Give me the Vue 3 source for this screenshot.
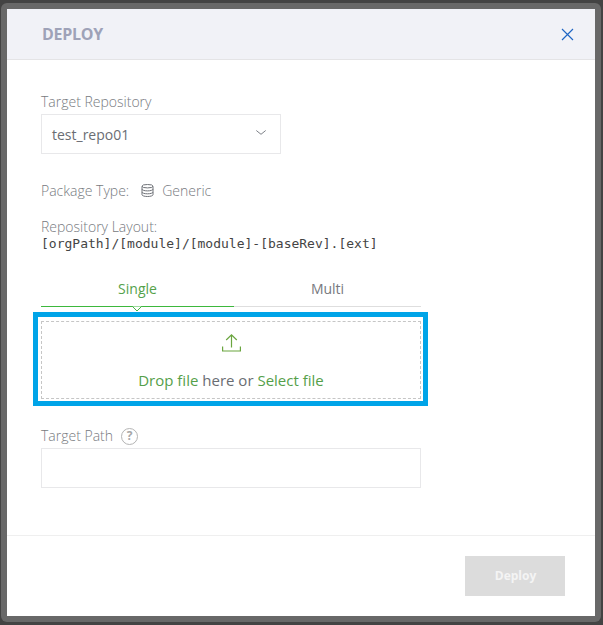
<script setup>
const tabs = [
  { label: 'Single', active: true },
  { label: 'Multi', active: false },
]
</script>

<template>
  <div class="screen">
    <div class="frame">
      <section class="modal">
        <header class="head">
          <h1 class="title">DEPLOY</h1>
          <svg class="close" width="13" height="13" viewBox="0 0 13 13" fill="none">
            <path d="M1 1l11 11M12 1L1 12" />
          </svg>
        </header>

        <div class="body">
          <label class="label first">Target Repository</label>
          <div class="select">
            <span>test_repo01</span>
            <svg class="chev" width="10" height="5" viewBox="0 0 10 5" fill="none" stroke="#7d8087" stroke-width="1">
              <path d="M.3.500L5 4.300 9.700.500" />
            </svg>
          </div>

          <div class="pkg">
            <span class="muted">Package Type:</span>
            <svg class="db" width="13" height="13" viewBox="0 0 13 13" fill="none" stroke="#6f7278" stroke-width="1">
              <ellipse cx="6.500" cy="2.200" rx="5.500" ry="1.700" />
              <path d="M1 2.200v8.600c0 .9 2.500 1.700 5.500 1.700s5.500-.8 5.500-1.700V2.200M1 5.200c0 .9 2.500 1.700 5.500 1.700S12 6.100 12 5.200M1 8.100c0 .9 2.500 1.700 5.500 1.700S12 9 12 8.100" />
            </svg>
            <span class="muted">Generic</span>
          </div>

          <div class="muted layout-label">Repository Layout:</div>
          <div class="mono">[orgPath]/[module]/[module]-[baseRev].[ext]</div>

          <div class="tabs">
            <div v-for="t in tabs" :key="t.label" class="tab" :class="{ active: t.active }">
              {{ t.label }}
              <svg v-if="t.active" class="caret" width="12" height="7" viewBox="0 0 12 7">
                <path d="M0 .5h1.500L6 5l4.500-4.500H12" fill="#fff" stroke="#45b545" stroke-width="1" />
              </svg>
            </div>
          </div>

          <div class="drop">
            <svg class="upload" width="19" height="18" viewBox="0 0 19 18" fill="none" stroke="#6aa53f" stroke-width="1.200">
              <path d="M.6 12.500v4.500h17.800v-4.500M9.500 13.500V1M4.200 6L9.500 .9 14.800 6" />
            </svg>
            <div class="drop-text"><span class="green">Drop file</span> here or <span class="green">Select file</span></div>
            <div class="highlight"></div>
          </div>

          <div class="path-label">
            <label class="label">Target Path</label>
            <span class="help">?</span>
          </div>
          <div class="input"></div>
        </div>

        <footer class="foot">
          <button class="deploy" type="button">Deploy</button>
        </footer>
      </section>
    </div>
  </div>
</template>

<style>
html, body { margin: 0; background: #434343; }
</style>

<style scoped>
.screen {
  width: 603px;
  height: 625px;
  padding: 3px 2px 3px 1px;
  box-sizing: border-box;
  background: #434343;
  overflow: hidden;
  font-family: "Open Sans", "Liberation Sans", sans-serif;
  font-size: 14px;
  color: #6a6d73;
}
.frame {
  height: 100%;
  padding: 6px;
  box-sizing: border-box;
  background: #686868;
  border-radius: 6px;
}
.modal {
  height: 607px;
  background: #fff;
  display: flex;
  flex-direction: column;
}
.head {
  height: 51px;
  flex: none;
  box-sizing: border-box;
  background: #f1f2f7;
  border-bottom: 1px solid #e4e4e6;
  display: flex;
  align-items: center;
  justify-content: space-between;
  padding: 0 21px 0 35px;
}
.title {
  margin: 0;
  font-size: 16px;
  font-weight: 700;
  letter-spacing: -0.3px;
  color: #9ea2b8;
}
.close { display: block; }
.close path { stroke: #1f66c4; stroke-width: 1.15px; }
.body {
  flex: 1;
  padding: 0 34px;
  width: 380px;
}
.label { color: #777a80; font-size: 14px; font-weight: 300; line-height: 20px; display: block; }
.first { margin-top: 32px; }
.select {
  margin-top: 2px;
  width: 240px;
  height: 40px;
  box-sizing: border-box;
  border: 1px solid #e8e8ea;
  display: flex;
  align-items: center;
  justify-content: space-between;
  padding: 0 14px 0 10px;
  color: #6a6d73;
}
.chev { display: block; margin-top: -3px; }
.pkg {
  margin-top: 26px;
  height: 20px;
  display: flex;
  align-items: center;
}
.muted { color: #777a80; font-weight: 300; }
.db { margin: 0 8px 0 12px; }
.layout-label { margin-top: 18px; line-height: 18px; }
.mono {
  font-family: "DejaVu Sans Mono", "Liberation Mono", monospace;
  font-size: 13px;
  line-height: 16px;
  color: #444;
  white-space: nowrap;
}
.tabs {
  margin-top: 19px;
  margin-bottom: 14px;
  display: flex;
  height: 35px;
  border-bottom: 1px solid #dedede;
}
.tab {
  position: relative;
  flex: none;
  width: 193px;
  height: 36px;
  box-sizing: border-box;
  text-align: center;
  line-height: 36px;
  color: #77797e;
}
.tab + .tab { width: 187px; }
.tab.active {
  color: #54a24a;
  border-bottom: 1px solid #3db83d;
}
.caret { position: absolute; left: 90px; top: 35px; display: block; }
.drop {
  position: relative;
  height: 78px;
  box-sizing: border-box;
  border: 1px dashed #c6c6c6;
  text-align: center;
}
.upload { display: block; margin: 12px auto 0; }
.drop-text { margin-top: 18px; font-size: 15px; line-height: 20px; color: #6a6d73; }
.green { color: #55a04a; }
.highlight {
  position: absolute;
  left: -9px;
  top: -10px;
  width: 385px;
  height: 84px;
  border: 5px solid #00a4e8;
  pointer-events: none;
}
.path-label {
  margin-top: 27px;
  display: flex;
  align-items: center;
  gap: 8px;
  height: 20px;
}
.help {
  width: 17px;
  height: 17px;
  box-sizing: border-box;
  border: 1.500px solid #b4b4b4;
  border-radius: 50%;
  font-size: 12px;
  font-weight: 700;
  line-height: 14px;
  text-align: center;
  color: #a8a8a8;
}
.input {
  margin-top: 2px;
  height: 40px;
  box-sizing: border-box;
  border: 1px solid #e8e8ea;
}
.foot {
  flex: none;
  height: 81px;
  box-sizing: border-box;
  border-top: 1px solid #efefef;
  display: flex;
  justify-content: flex-end;
  padding: 20px 30px 0 0;
}
.deploy {
  width: 100px;
  height: 40px;
  border: 0;
  padding: 0 0 2px 1px;
  background: #dcdcdc;
  color: #f4f4f4;
  font-family: "Open Sans", "Liberation Sans", sans-serif;
  font-size: 12px;
  font-weight: 700;
}
</style>
